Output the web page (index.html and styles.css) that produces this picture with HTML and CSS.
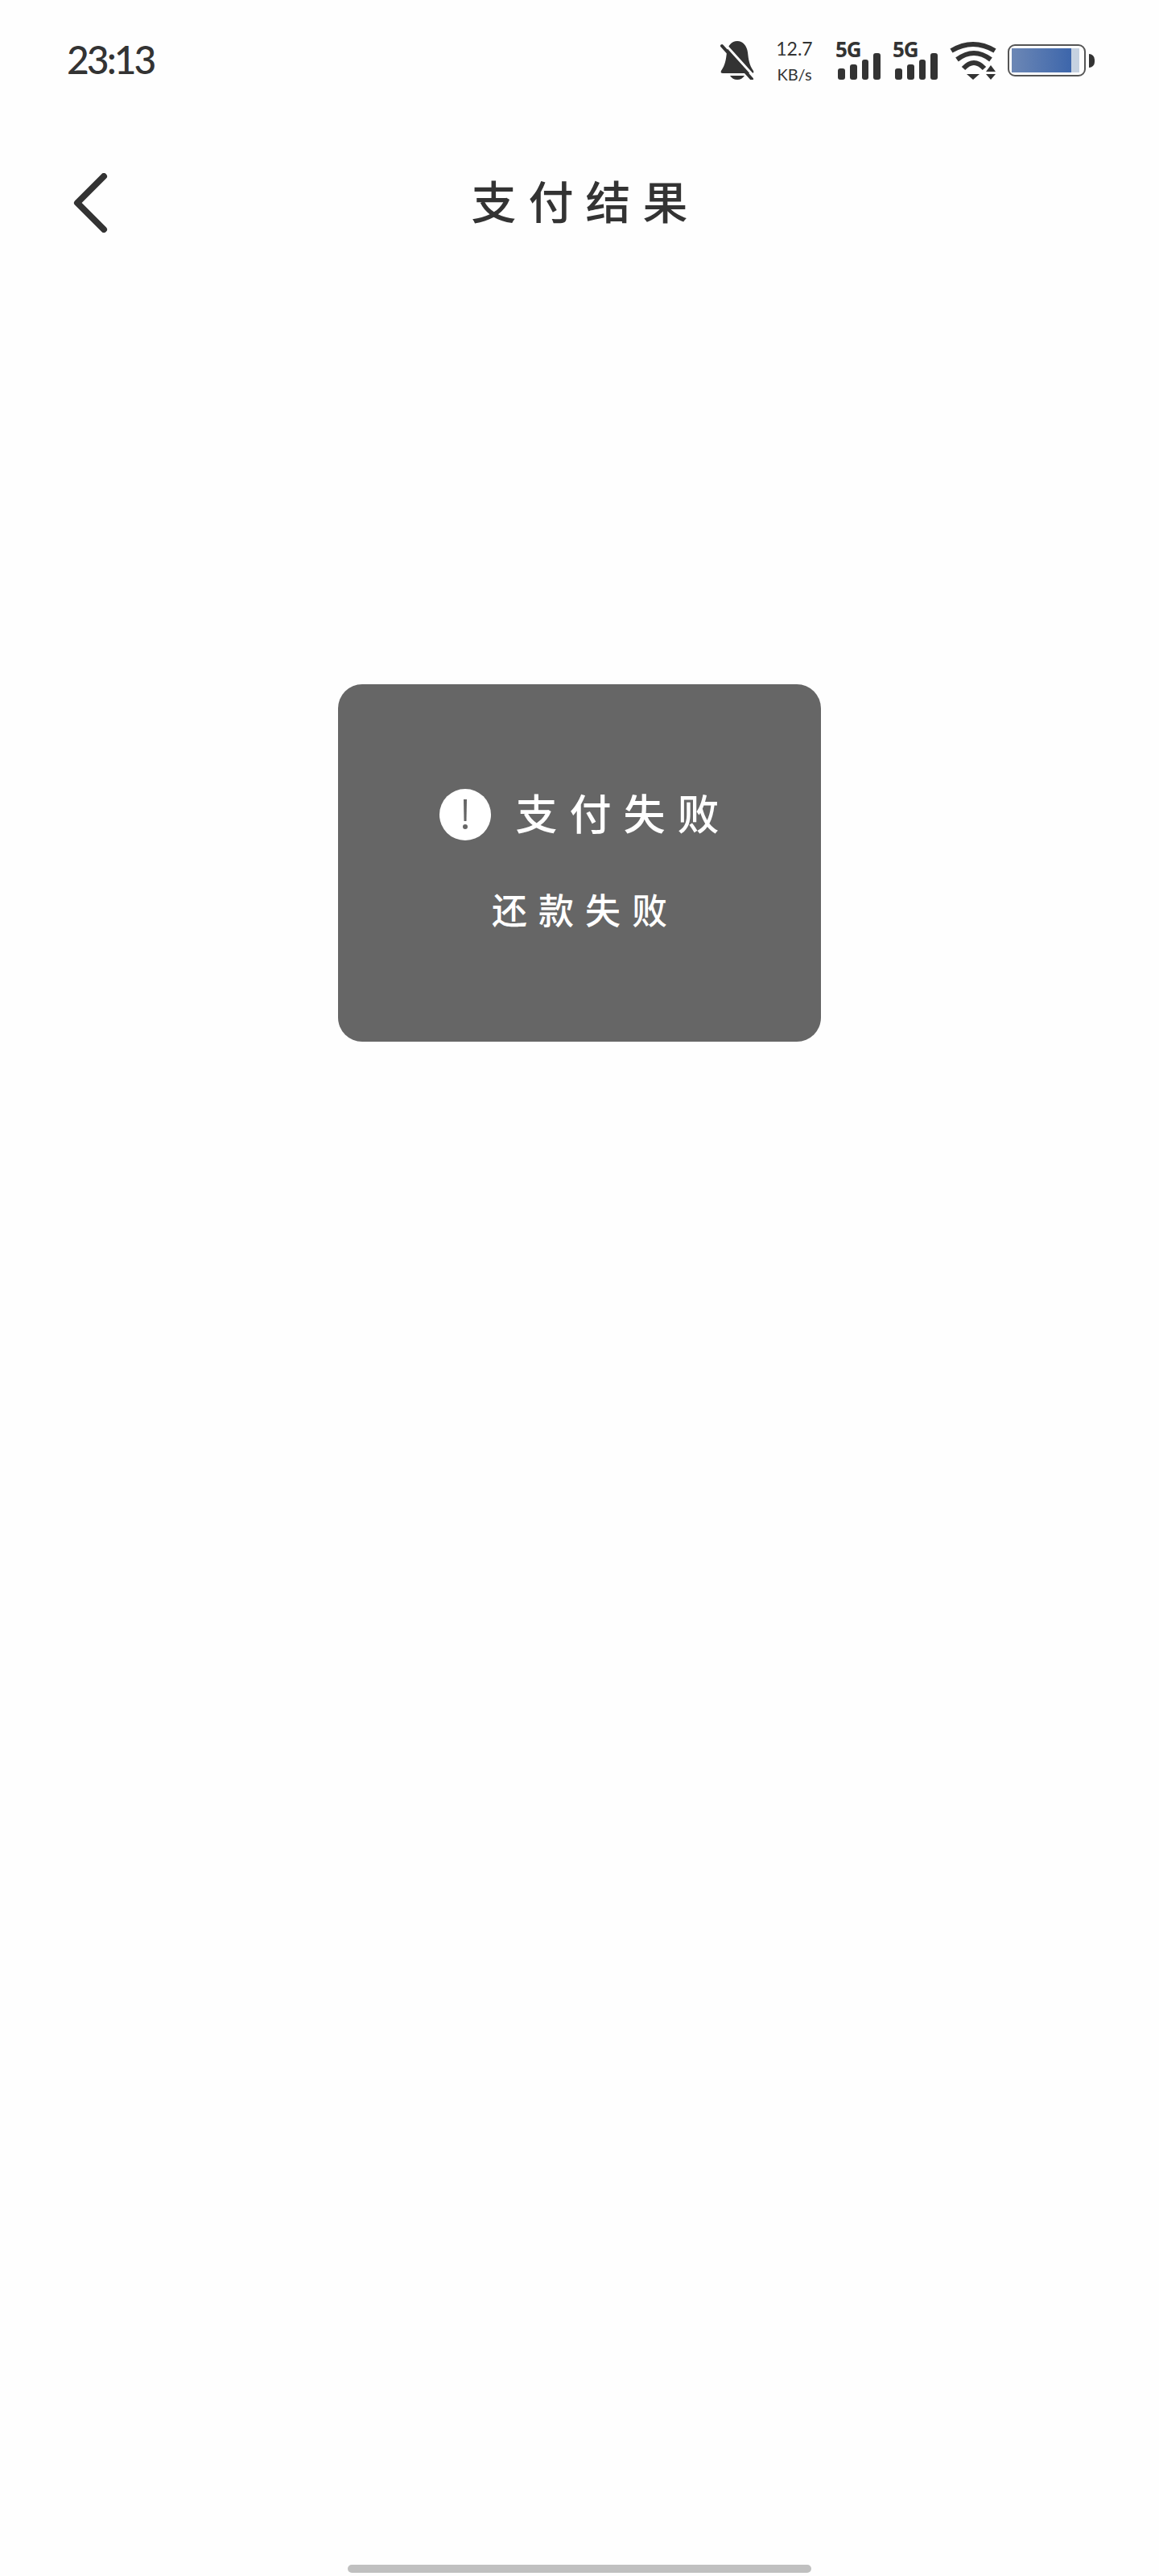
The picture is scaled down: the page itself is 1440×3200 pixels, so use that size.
FILE: index.html
```html
<!DOCTYPE html>
<html lang="zh-CN">
<head>
    <meta charset="UTF-8">
    <meta name="viewport" content="width=device-width, initial-scale=1.0">
    <title>支付结果</title>
    <link rel="stylesheet" href="styles.css">
</head>
<body>
    <div class="status-bar">
        <span class="status-time">23:13</span>
        <div class="status-icons">
            <svg class="icon-bell" viewBox="0 0 42 48">
                <path d="M21 0c7 0 12 6 13 14 1 9 2 16 7 23 1 2 0 3-2 3H3c-2 0-3-1-2-3 5-7 6-14 7-23C9 6 14 0 21 0z" fill="#333"/>
                <path d="M12 43h18c-2 3-5 5-9 5s-7-2-9-5z" fill="#333"/>
                <path d="M5 3l37 41" stroke="#fefefe" stroke-width="3"/>
                <path d="M2 6l37 41" stroke="#333" stroke-width="4" stroke-linecap="round"/>
            </svg>
            <div class="net-speed">
                <span class="net-value">12.7</span>
                <span class="net-unit">KB/s</span>
            </div>
            <div class="signal">
                <span class="signal-label">5G</span>
                <div class="signal-bars">
                    <i class="bar bar-1"></i>
                    <i class="bar bar-2"></i>
                    <i class="bar bar-3"></i>
                    <i class="bar bar-4"></i>
                </div>
            </div>
            <div class="signal">
                <span class="signal-label">5G</span>
                <div class="signal-bars">
                    <i class="bar bar-1"></i>
                    <i class="bar bar-2"></i>
                    <i class="bar bar-3"></i>
                    <i class="bar bar-4"></i>
                </div>
            </div>
            <svg class="icon-wifi" viewBox="0 0 58 48">
                <g fill="none" stroke="#333" stroke-width="6">
                    <path d="M2 12Q29-4 56 12"/>
                    <path d="M9 23Q30 7 51 23"/>
                    <path d="M17 34Q30 20 43 34"/>
                </g>
                <path d="M21 41h16l-8 7zM51 30l6 8H45zM45 41h12l-6 7z" fill="#333"/>
            </svg>
            <div class="battery">
                <div class="battery-body">
                    <div class="battery-fill"></div>
                </div>
                <div class="battery-tip"></div>
            </div>
        </div>
    </div>

    <div class="nav-bar">
        <svg class="icon-back" viewBox="0 0 44 74">
            <path d="M38 4L5 37l33 33" fill="none" stroke="#333" stroke-width="8" stroke-linecap="round" stroke-linejoin="round"/>
        </svg>
        <h1 class="nav-title">支付结果</h1>
    </div>

    <div class="result-card">
        <div class="result-head">
            <svg class="icon-alert" viewBox="0 0 64 64">
                <circle cx="32" cy="32" r="32" fill="#fff"/>
                <path d="M30 13h4l-.5 27h-3z" fill="#666"/>
                <circle cx="32" cy="47" r="3" fill="#666"/>
            </svg>
            <span class="result-title">支付失败</span>
        </div>
        <p class="result-msg">还款失败</p>
    </div>

    <div class="home-bar"></div>
</body>
</html>
```

FILE: styles.css
```css
* {
    box-sizing: border-box;
}
body {
    margin: 0;
    height: 3200px;
    display: flex;
    flex-direction: column;
    background: #fefefe;
    color: #333;
    font-family: "Noto Sans CJK SC", "Noto Sans", sans-serif;
    overflow: hidden;
}

.status-bar {
    height: 150px;
    padding: 0 78px 0 83px;
    display: flex;
    justify-content: space-between;
    align-items: center;
}
.status-time {
    margin-bottom: 2px;
    font-family: "Lato", sans-serif;
    font-size: 48px;
    font-weight: 500;
    line-height: 1;
    letter-spacing: -3px;
}
.status-icons {
    display: flex;
    align-items: center;
}
.icon-bell {
    width: 42px;
    height: 48px;
    margin-left: 2px;
    margin-right: 26px;
}
.net-speed {
    width: 48px;
    margin-right: 27px;
    display: flex;
    flex-direction: column;
    align-items: center;
    gap: 10px;
    font-family: "Lato", sans-serif;
    line-height: 1;
}
.net-value {
    font-size: 23px;
}
.net-unit {
    font-size: 20px;
}
.signal {
    width: 56px;
    margin-right: 15px;
    padding-left: 3px;
    display: flex;
    flex-direction: column;
}
.signal-label {
    margin-left: -3px;
    height: 20px;
    font-family: "Open Sans", sans-serif;
    font-size: 26px;
    font-weight: 700;
    line-height: 20px;
    letter-spacing: -1px;
}
.signal-bars {
    height: 33px;
    margin-top: -5px;
    display: flex;
    align-items: flex-end;
    gap: 6px;
}
.bar {
    width: 9px;
    background: #333;
    border-radius: 3px;
}
.bar-1 { height: 14px; }
.bar-2 { height: 19px; }
.bar-3 { height: 25px; }
.bar-4 { height: 33px; }
.icon-wifi {
    width: 60px;
    height: 48px;
    margin-left: -1px;
    margin-right: 13px;
}
.battery {
    display: flex;
    align-items: center;
    gap: 4px;
}
.battery-body {
    width: 97px;
    height: 40px;
    padding: 3px;
    border: 2px solid #555;
    border-radius: 9px;
}
.battery-fill {
    width: 74px;
    height: 100%;
    background: linear-gradient(90deg, #6c87b5, #3d66ab);
    box-shadow: 10px 0 0 #c5d1e0;
}
.battery-tip {
    width: 7px;
    height: 17px;
    margin-right: 2px;
    background: #333;
    border-radius: 0 9px 9px 0;
}

.nav-bar {
    height: 204px;
    display: grid;
    grid-template-columns: 1fr auto 1fr;
    align-items: center;
    padding-left: 91px;
}
.icon-back {
    width: 44px;
    height: 74px;
}
.nav-title {
    margin: 0 0 8px -91px;
    padding-left: 15px;
    font-size: 56px;
    font-weight: 500;
    line-height: 1;
    letter-spacing: 15px;
}

.result-card {
    width: 600px;
    height: 444px;
    margin: 496px 0 0 420px;
    padding-top: 130px;
    background: #666;
    border-radius: 30px;
    color: #fff;
}
.result-head {
    display: flex;
    justify-content: center;
    align-items: center;
    gap: 30px;
}
.icon-alert {
    width: 64px;
    height: 64px;
}
.result-title {
    margin-right: -15px;
    margin-bottom: 6px;
    font-size: 52px;
    font-weight: 500;
    line-height: 58px;
    letter-spacing: 15px;
}
.result-msg {
    margin: 55px 0 0;
    padding-left: 14px;
    font-size: 44px;
    font-weight: 500;
    line-height: 60px;
    letter-spacing: 14px;
    text-align: center;
}

.home-bar {
    width: 576px;
    height: 10px;
    margin: auto 0 4px 432px;
    background: #c0c0c0;
    border-radius: 5px;
}
```
